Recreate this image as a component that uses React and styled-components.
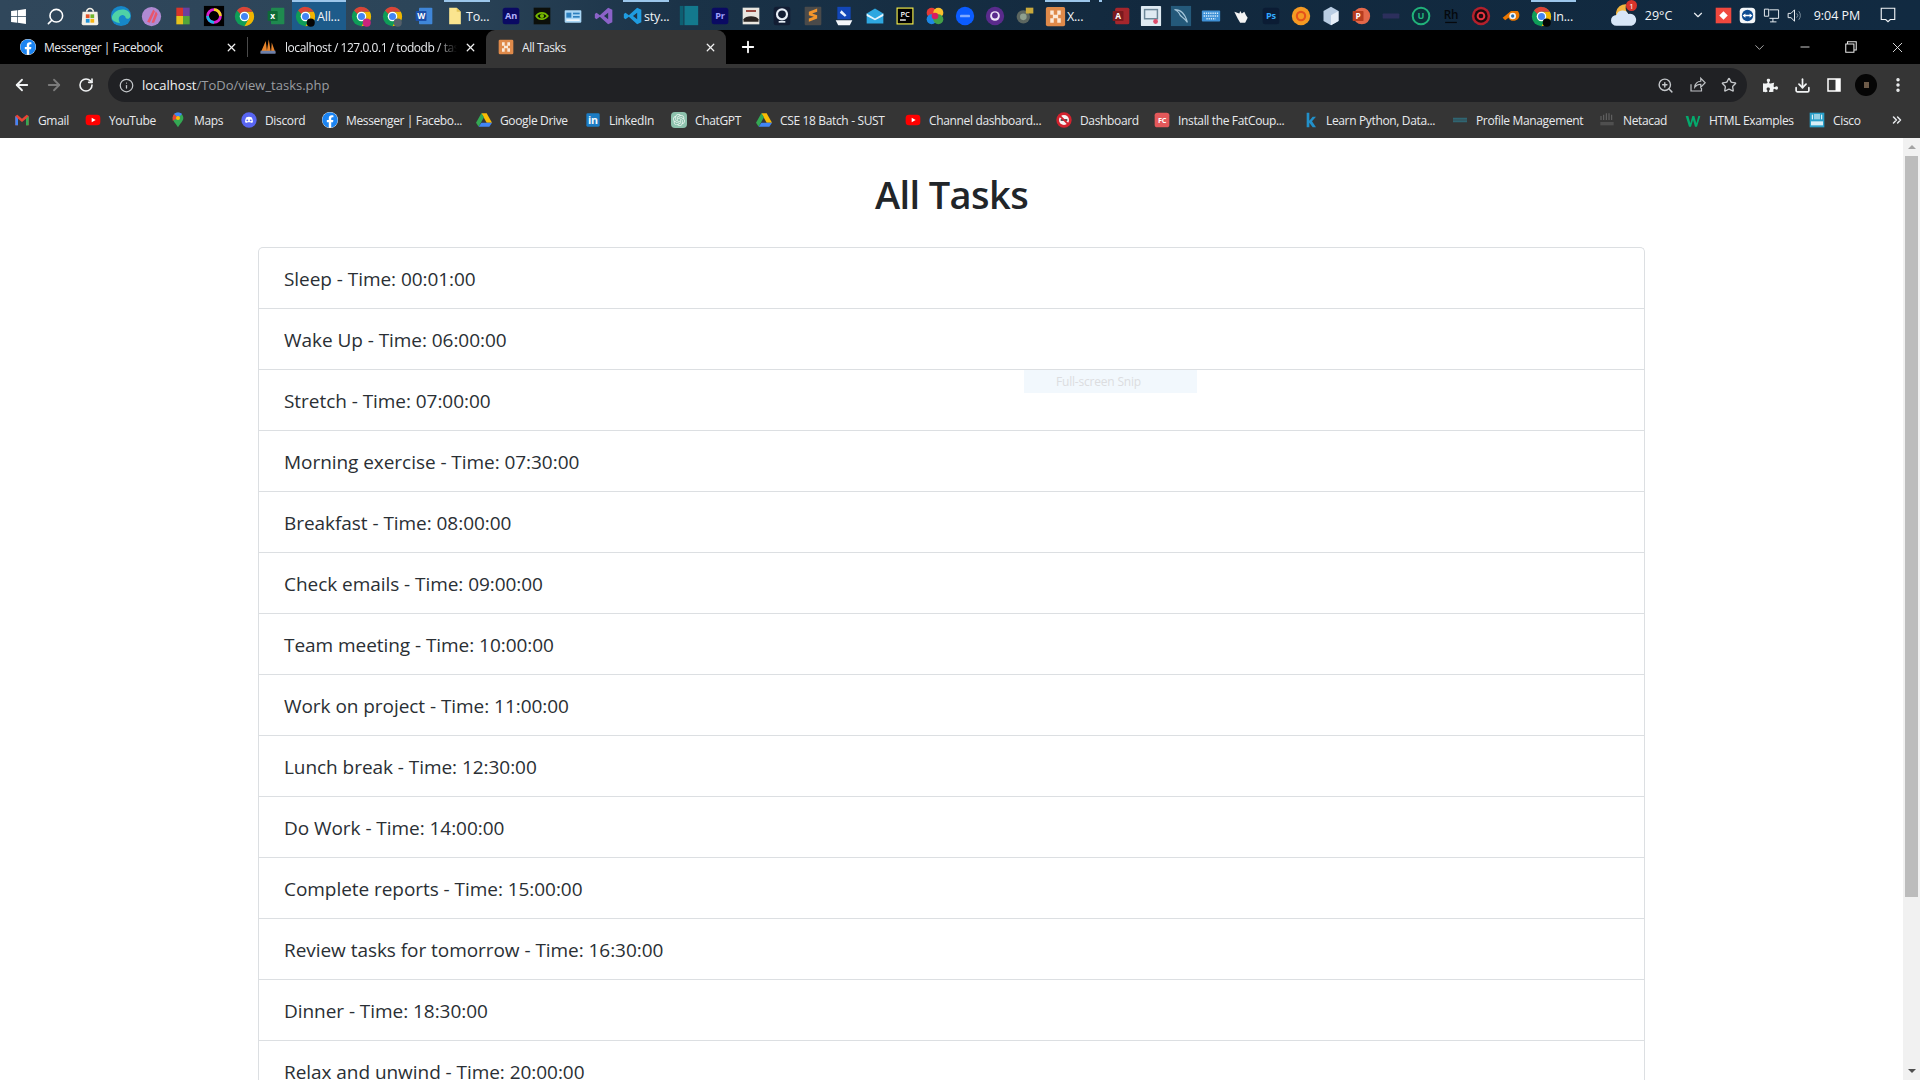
import React from "react";
import styled, { createGlobalStyle } from "styled-components";
import {
  ArrowLeft,
  ArrowRight,
  RotateCw,
  Info,
  ZoomIn,
  Star,
  Download,
  MoreVertical,
  X,
  Plus,
  Minus,
  ChevronDown,
  ChevronsRight,
  Search,
} from "lucide-react";
import { FaWindows, FaPuzzlePiece, FaFacebook } from "react-icons/fa";
import { SiOpenai } from "react-icons/si";

const UI_FONT = `"Open Sans", "Noto Sans", sans-serif`;

const GlobalStyle = createGlobalStyle`
  html, body { margin: 0; padding: 0; height: 100%; overflow: hidden; background: #fff; }
  * { box-sizing: border-box; }
`;

const Screen = styled.div`
  width: 1920px;
  height: 1080px;
  display: flex;
  flex-direction: column;
  overflow: hidden;
  font-family: ${UI_FONT};
  position: relative;
`;

/* windows taskbar */
const Taskbar = styled.div`
  height: 30px;
  flex: none;
  display: flex;
  align-items: stretch;
  background: linear-gradient(90deg, #30475b 0%, #2c4559 22%, #1a3247 36%, #12293e 60%, #112a41 100%);
  color: #f2f5f8;
  font-size: 12.5px;
`;

const TaskItem = styled.div`
  flex: none;
  width: ${({ $w }) => $w || 31}px;
  margin-left: ${({ $ml }) => $ml || 0}px;
  padding-left: ${({ $pad }) => $pad || 0}px;
  display: flex;
  align-items: center;
  justify-content: ${({ $label }) => ($label ? "flex-start" : "center")};
  gap: 1px;
  position: relative;
  background: ${({ $active }) => ($active ? "#1d5b8a" : "transparent")};
  border-top: ${({ $open }) => ($open ? "2px solid #9cc6ea" : "2px solid transparent")};
  white-space: nowrap;
  letter-spacing: -0.2px;
`;

const PinMark = styled.div`
  flex: none;
  width: 16px;
  padding-left: 9px;
`;

const PinStrip = styled.div`
  width: 3px;
  height: 2px;
  background: #9cc6ea;
`;

const Tray = styled.div`
  display: flex;
  align-items: center;
  margin-left: 35px;
  font-size: 12.5px;
`;

const TraySlot = styled.div`
  flex: none;
  display: flex;
  align-items: center;
  justify-content: center;
  width: ${({ $w }) => $w}px;
  margin-left: ${({ $ml }) => $ml || 0}px;
  white-space: nowrap;
  position: relative;
`;

const Badge = styled.span`
  position: absolute;
  top: -2px;
  right: 0;
  width: 11px;
  height: 11px;
  border-radius: 50%;
  background: #d9342b;
  color: #fff;
  font-size: 8px;
  line-height: 11px;
  text-align: center;
`;

/* chrome tabs */
const TabStrip = styled.div`
  height: 34px;
  flex: none;
  display: flex;
  background: #000;
  color: #e8eaed;
  font-size: 12px;
`;

const Tab = styled.div`
  flex: none;
  width: ${({ $w }) => $w}px;
  display: flex;
  align-items: center;
  padding-left: ${({ $pl }) => $pl}px;
  position: relative;
  background: ${({ $active }) => ($active ? "#353535" : "transparent")};
  border-radius: ${({ $active }) => ($active ? "9px 9px 0 0" : "0")};
  letter-spacing: -0.45px;
`;

const TabTitle = styled.span`
  margin-left: 8px;
  width: ${({ $w }) => $w}px;
  overflow: hidden;
  white-space: nowrap;
  mask-image: ${({ $fade }) => ($fade ? "linear-gradient(90deg, #000 88%, transparent)" : "none")};
`;

const TabClose = styled.span`
  position: absolute;
  right: 9px;
  top: 11px;
  display: flex;
  color: #f1f1f1;
`;

const TabDivider = styled.div`
  flex: none;
  width: 1px;
  height: 20px;
  margin-top: 7px;
  background: #4a4a4a;
`;

const NewTab = styled.div`
  flex: none;
  width: 22px;
  margin-left: 11px;
  display: flex;
  align-items: center;
  justify-content: center;
  color: #fff;
`;

const WindowControls = styled.div`
  margin-left: auto;
  display: flex;
  align-items: center;
  color: #e8e8e8;
`;

const WindowButton = styled.div`
  flex: none;
  width: 46px;
  display: flex;
  justify-content: center;
`;

/* chrome toolbar */
const Toolbar = styled.div`
  height: 38px;
  flex: none;
  display: flex;
  align-items: flex-end;
  padding-left: 6px;
  background: #353535;
  color: #f1f3f4;
`;

const NavButton = styled.div`
  flex: none;
  width: 32px;
  height: 34px;
  margin-left: ${({ $ml }) => $ml || 0}px;
  display: flex;
  align-items: center;
  justify-content: center;
  color: ${({ $dim }) => ($dim ? "#7b7b7b" : "#f1f3f4")};
`;

const Omnibox = styled.div`
  flex: none;
  width: 1639px;
  height: 34px;
  margin-left: 6px;
  border-radius: 17px;
  background: #202124;
  display: flex;
  align-items: center;
  padding-left: 11px;
`;

const Url = styled.div`
  margin-left: 8px;
  font-size: 13px;
  letter-spacing: 0;
  color: #f1f3f4;
`;

const UrlPath = styled.span`
  color: #9a9da1;
`;

const OmniActions = styled.div`
  margin-left: auto;
  display: flex;
  align-items: center;
  padding-right: 2px;
  color: #c4c7ca;
`;

const OmniButton = styled.div`
  flex: none;
  width: 32px;
  display: flex;
  justify-content: center;
`;

const Avatar = styled.div`
  width: 22px;
  height: 22px;
  border-radius: 50%;
  background: #050505;
  display: flex;
  align-items: center;
  justify-content: center;
`;

const AvatarDot = styled.div`
  width: 5px;
  height: 6px;
  background: #6c5a48;
`;

/* bookmarks */
const Bookmarks = styled.div`
  height: 36px;
  flex: none;
  display: flex;
  align-items: center;
  padding-left: 14px;
  background: #353535;
  color: #e8eaed;
  font-size: 12px;
  letter-spacing: -0.35px;
`;

const Bookmark = styled.div`
  flex: none;
  width: ${({ $w }) => $w}px;
  display: flex;
  align-items: center;
  gap: 8px;
  white-space: nowrap;
`;

const BookmarkMore = styled.div`
  flex: none;
  display: flex;
  margin-left: 9px;
`;

const ChatGptTile = styled.span`
  flex: none;
  display: flex;
  width: 16px;
  height: 16px;
  border-radius: 4px;
  background: #8dc2ad;
  align-items: center;
  justify-content: center;
`;

const FacebookDisc = styled(FaFacebook)`
  flex: none;
  background: #fff;
  border-radius: 50%;
`;

/* page */
const Viewport = styled.div`
  flex: 1;
  min-height: 0;
  display: flex;
  background: #fff;
`;

const Page = styled.div`
  flex: 1;
  min-width: 0;
  overflow: hidden;
  padding: 32px 258px 0;
  color: #2a2f34;
  font-family: ${UI_FONT};
`;

const Heading = styled.h1`
  margin: 0 0 29px;
  font-size: 38px;
  line-height: 48px;
  font-weight: 600;
  text-align: center;
  letter-spacing: -0.6px;
  color: #212529;
`;

const TaskList = styled.ul`
  list-style: none;
  margin: 0;
  padding: 0;
  border: 1px solid #dcdfe2;
  border-bottom: 0;
  border-radius: 5px 5px 0 0;
`;

const TaskRow = styled.li`
  height: 61px;
  padding: 2px 25px 0;
  display: flex;
  align-items: center;
  font-size: 19px;
  letter-spacing: -0.05px;
  border-bottom: 1px solid #dcdfe2;
`;

const Scrollbar = styled.div`
  flex: none;
  width: 17px;
  display: flex;
  flex-direction: column;
  background: #f1f1f1;
`;

const ScrollArrow = styled.div`
  flex: none;
  height: 18px;
  display: flex;
  align-items: center;
  justify-content: center;
`;

const ScrollTriangle = styled.div`
  width: 0;
  height: 0;
  border-left: 4px solid transparent;
  border-right: 4px solid transparent;
  ${({ $down }) => ($down ? "border-top: 4px solid #505050;" : "border-bottom: 4px solid #a3a3a3;")}
`;

const ScrollTrack = styled.div`
  flex: 1;
  padding: 0 2px;
`;

const ScrollThumb = styled.div`
  height: 741px;
  background: #bcbcbc;
`;

const SnipLabel = styled.div`
  position: absolute;
  left: 1024px;
  top: 370px;
  width: 173px;
  height: 23px;
  padding-left: 32px;
  background: #f2f8fd;
  color: #dcdde0;
  font-size: 12px;
  line-height: 23px;
  letter-spacing: -0.2px;
`;

const Glyph = ({ s = 20, children }) => (
  <svg width={s} height={s} viewBox="0 0 24 24" style={{ flex: "none" }}>
    {children}
  </svg>
);

const Letters = ({ x = 12, y = 16, size = 12, fill = "#fff", weight = 700, children }) => (
  <text x={x} y={y} fontSize={size} fontWeight={weight} fill={fill} textAnchor="middle" fontFamily="Open Sans, sans-serif">
    {children}
  </text>
);

const Chrome = ({ s = 21, dot }) => (
  <Glyph s={s}>
    <circle cx="12" cy="12" r="11" fill="#0f9d58" />
    <path d="M21.5 6.5A11 11 0 0 1 12 23l4.8-8.3A5.5 5.5 0 0 0 12 6.5Z" fill="#f4b400" />
    <path d="M12 1A11 11 0 0 1 21.5 6.5H12A5.5 5.5 0 0 0 7.2 9.2L3.5 5A11 11 0 0 1 12 1Z" fill="#db4437" />
    <circle cx="12" cy="12" r="5.5" fill="#fff" />
    <circle cx="12" cy="12" r="4" fill="#4285f4" />
    {dot && <circle cx="18" cy="19" r="4.6" fill={dot} />}
  </Glyph>
);

const Square = ({ fill, text, color, r = 3 }) => (
  <Glyph>
    <rect x="2" y="2" width="20" height="20" rx={r} fill={fill} />
    <Letters size={11} fill={color || "#fff"}>
      {text}
    </Letters>
  </Glyph>
);

const XamppMark = ({ s }) => (
  <Glyph s={s}>
    <rect x="1" y="1" width="22" height="22" rx="2" fill="#df8a4a" />
    <path d="M6 5h4v5H6Zm8 0h4v5h-4ZM6 14h4v5H6Zm8 0h4v5h-4ZM9 10h6v4H9Z" fill="#fbe9d8" />
  </Glyph>
);

const taskIcons = {
  store: (
    <Glyph>
      <path d="M3 7h18l1 14a2 2 0 0 1-2 2H4a2 2 0 0 1-2-2Z" fill="#f2efe6" />
      <path d="M8 7a4 4 0 0 1 8 0" fill="none" stroke="#f2efe6" strokeWidth="2" />
      <rect x="7" y="10" width="4.5" height="4.5" fill="#e2542b" />
      <rect x="12.5" y="10" width="4.5" height="4.5" fill="#6fb52c" />
      <rect x="7" y="15.5" width="4.5" height="4.5" fill="#1f93d8" />
      <rect x="12.5" y="15.5" width="4.5" height="4.5" fill="#f7b511" />
    </Glyph>
  ),
  edge: (
    <Glyph s={22}>
      <circle cx="12" cy="12" r="11" fill="#1687c9" />
      <path d="M2 14C3 6 14 2 20 7c3 3 3 8-1 8-3 0-1-3-5-4-4 0-6 4-3 9-5-1-9-3-9-6Z" fill="#4fd2a6" />
    </Glyph>
  ),
  orb: (
    <Glyph s={21}>
      <circle cx="12" cy="12" r="11" fill="#b08ad3" />
      <path d="M7 18 14 4l2 2-6 13Zm5 1 5-13 2 3-4 10Z" fill="#e8566d" />
    </Glyph>
  ),
  blocks: (
    <Glyph>
      <rect x="4" y="2" width="8" height="10" fill="#d8352a" />
      <rect x="12" y="2" width="8" height="10" fill="#6a3fa0" />
      <rect x="4" y="12" width="8" height="10" fill="#e7c31c" />
      <rect x="12" y="12" width="8" height="10" fill="#52a43a" />
    </Glyph>
  ),
  ring: (
    <Glyph s={22}>
      <rect x="1" y="1" width="22" height="22" fill="#000" />
      <circle cx="12" cy="12" r="7" fill="none" stroke="#d81fd0" strokeWidth="3" />
      <path d="M12 5a7 7 0 0 1 7 7" fill="none" stroke="#f4d41e" strokeWidth="3" />
      <path d="M12 19a7 7 0 0 1-7-7" fill="none" stroke="#1fb6e8" strokeWidth="3" />
    </Glyph>
  ),
  chrome: <Chrome />,
  chromeDot: <Chrome dot="#050505" />,
  chromePink: <Chrome dot="#c9247d" />,
  chromeGrey: <Chrome dot="#55606a" />,
  excel: (
    <Glyph>
      <rect x="6" y="2" width="16" height="20" rx="1" fill="#1f8a4f" />
      <rect x="2" y="6" width="12" height="12" rx="1" fill="#0e6a37" />
      <Letters x={8} y={16} size={10}>x</Letters>
    </Glyph>
  ),
  word: (
    <Glyph>
      <rect x="6" y="2" width="16" height="20" rx="1" fill="#3f86d8" />
      <rect x="2" y="6" width="13" height="12" rx="1" fill="#1c4fa8" />
      <Letters x={8.5} y={16} size={10}>W</Letters>
    </Glyph>
  ),
  folder: (
    <Glyph>
      <path d="M5 2h9l5 5v15H5Z" fill="#fbe58f" />
      <path d="M14 2l5 5h-5Z" fill="#e5c65a" />
    </Glyph>
  ),
  an: <Square fill="#0a0a63" text="An" color="#b5b5ff" />,
  nvidia: (
    <Glyph>
      <rect x="2" y="2" width="20" height="20" fill="#0c0f0a" />
      <path d="M5 12c3-5 10-5 14 0-4 5-11 5-14 0Z" fill="none" stroke="#76b900" strokeWidth="2" />
      <circle cx="12" cy="12" r="2.5" fill="#76b900" />
    </Glyph>
  ),
  idcard: (
    <Glyph>
      <rect x="2" y="5" width="20" height="15" rx="1" fill="#a9d6f5" />
      <rect x="4" y="8" width="6" height="6" fill="#2c7fbe" />
      <rect x="12" y="8" width="8" height="2" fill="#2c7fbe" />
      <rect x="12" y="12" width="8" height="2" fill="#2c7fbe" />
      <rect x="4" y="16" width="16" height="2" fill="#f0f6fb" />
    </Glyph>
  ),
  vs: (
    <Glyph>
      <path d="M17 2 22 4.5v15L17 22 7 13l-4 3-2-1.5v-5L3 8l4 3Zm0 6-5 4 5 4Z" fill="#8b62c8" />
    </Glyph>
  ),
  vscode: (
    <Glyph>
      <path d="M17 2 22 4.5v15L17 22 7 13l-4 3-2-1.5v-5L3 8l4 3Zm0 6-5 4 5 4Z" fill="#1f9ce0" />
    </Glyph>
  ),
  teal: (
    <Glyph s={22}>
      <rect x="2" y="1" width="4" height="21" fill="#0d5f72" />
      <rect x="7" y="1" width="15" height="21" fill="#13798d" />
    </Glyph>
  ),
  pr: <Square fill="#0a0a63" text="Pr" color="#9f9fff" />,
  car: (
    <Glyph>
      <rect x="2" y="2" width="20" height="20" fill="#e9e6e0" />
      <rect x="6" y="5" width="12" height="2" fill="#8a2b22" />
      <path d="M3 16c2-5 16-5 18 0v3H3Z" fill="#2a2422" />
    </Glyph>
  ),
  webcam: (
    <Glyph>
      <rect x="2" y="1" width="20" height="22" rx="3" fill="#121d33" />
      <circle cx="12" cy="10" r="6" fill="none" stroke="#e6edf5" strokeWidth="2.6" />
      <rect x="8" y="18" width="8" height="2" fill="#e6edf5" />
    </Glyph>
  ),
  sublime: (
    <Glyph>
      <rect x="2" y="1" width="20" height="22" rx="1" fill="#4a4a4a" />
      <path d="M7 10l10-4v4l-6 2 6 2v4L7 22v-4l6-2-6-2Z" fill="#f2952c" transform="translate(0 -3)" />
    </Glyph>
  ),
  blue: (
    <Glyph>
      <rect x="4" y="1" width="16" height="15" fill="#1347b8" />
      <path d="M9 5l6 6-2 2-6-5Z" fill="#e8f2ff" />
      <path d="M2 17h20l-3 6H5Z" fill="#f4f7fb" />
    </Glyph>
  ),
  mail: (
    <Glyph>
      <path d="M2 9 12 3l10 6v12H2Z" fill="#2ea7e0" />
      <path d="M2 9l10 6 10-6v3l-10 5-10-5Z" fill="#e6f5fd" />
    </Glyph>
  ),
  pc: (
    <Glyph>
      <rect x="2.5" y="2.5" width="19" height="19" fill="#000" stroke="#f5ee4a" strokeWidth="1.4" />
      <Letters y={13} size={9} weight={600}>PC</Letters>
      <rect x="6" y="16" width="7" height="1.6" fill="#fff" />
    </Glyph>
  ),
  wheel: (
    <Glyph>
      <circle cx="8" cy="8" r="6" fill="#e53935" />
      <circle cx="16" cy="8" r="6" fill="#fbc02d" />
      <circle cx="8" cy="16" r="6" fill="#1e88e5" />
      <circle cx="16" cy="16" r="6" fill="#43a047" />
      <circle cx="12" cy="12" r="4" fill="#d81b60" />
    </Glyph>
  ),
  zoomApp: (
    <Glyph>
      <circle cx="12" cy="12" r="11" fill="#0b5cff" />
      <rect x="6" y="10.5" width="12" height="3" rx="1" fill="#7fa9ff" />
    </Glyph>
  ),
  github: (
    <Glyph>
      <circle cx="12" cy="12" r="11" fill="#5a2b8c" />
      <g transform="translate(5 5) scale(0.58)">
        <circle cx="12" cy="12" r="10" fill="#efe6f8" />
        <circle cx="12" cy="11" r="6" fill="#5a2b8c" />
      </g>
    </Glyph>
  ),
  dish: (
    <Glyph>
      <circle cx="10" cy="13" r="8" fill="#5c6660" />
      <circle cx="10" cy="13" r="4" fill="#8fa08e" />
      <rect x="13" y="2" width="9" height="7" fill="#c9a93c" />
    </Glyph>
  ),
  xampp: <XamppMark s={21} />,
  access: (
    <Glyph>
      <rect x="5" y="2" width="17" height="20" rx="2" fill="#a4262c" />
      <rect x="2" y="6" width="13" height="12" rx="1" fill="#7b1a1e" />
      <Letters x={8.5} y={16} size={10}>A</Letters>
    </Glyph>
  ),
  monitor: (
    <Glyph s={22}>
      <rect x="1" y="1" width="22" height="22" rx="1" fill="#dfeaf2" />
      <rect x="5" y="5" width="14" height="10" fill="none" stroke="#6d8798" strokeWidth="1.6" />
      <circle cx="17" cy="18" r="2.6" fill="#dd4b6b" />
    </Glyph>
  ),
  mysql: (
    <Glyph s={22}>
      <rect x="1" y="1" width="22" height="22" fill="#24597a" />
      <path d="M5 5c8 0 12 6 14 14-4-6-8-6-9-10-1-2-3-3-5-4Z" fill="none" stroke="#a3c4d8" strokeWidth="1.2" />
    </Glyph>
  ),
  keyboard: (
    <Glyph s={22}>
      <rect x="2" y="6" width="20" height="12" rx="1" fill="#3f91d6" />
      <path d="M4 9h16M4 12h16M7 15h10" stroke="#d6ecfb" strokeWidth="1.4" strokeDasharray="1.4 1" />
    </Glyph>
  ),
  hand: (
    <Glyph>
      <path d="M4 7l6 2 1-3 2 3 3-2 2 4 2 3-3 6h-6l-3-5Z" fill="#f4f4f4" />
    </Glyph>
  ),
  ps: <Square fill="#0b1c34" text="Ps" color="#31a8ff" />,
  ubuntu: (
    <Glyph>
      <circle cx="12" cy="12" r="11" fill="#f59a23" />
      <circle cx="12" cy="12" r="5" fill="none" stroke="#e4521b" strokeWidth="2.5" />
    </Glyph>
  ),
  cube: (
    <Glyph>
      <path d="M12 1l9 5v12l-9 5-9-5V6Z" fill="#b9cde3" />
      <path d="M12 11l9-5v12l-9 5Z" fill="#e6eef7" />
    </Glyph>
  ),
  ppt: (
    <Glyph>
      <circle cx="13" cy="12" r="10" fill="#e4684a" />
      <rect x="2" y="6" width="13" height="12" rx="1" fill="#b83d1f" />
      <Letters x={8.5} y={16} size={10}>P</Letters>
    </Glyph>
  ),
  dim: (
    <Glyph>
      <rect x="2" y="9" width="20" height="6" rx="1" fill="#2c2f5c" />
    </Glyph>
  ),
  upwork: (
    <Glyph>
      <circle cx="12" cy="12" r="10" fill="#0c2d3a" stroke="#21b27a" strokeWidth="2.4" />
      <Letters y={16} size={11} fill="#21b27a">U</Letters>
    </Glyph>
  ),
  rh: (
    <Glyph>
      <Letters y={15} size={14} fill="#05080c" weight={600}>Rh</Letters>
      <rect x="5" y="19" width="14" height="1.5" fill="#05080c" />
    </Glyph>
  ),
  redRing: (
    <Glyph>
      <circle cx="12" cy="12" r="11" fill="#b3202c" />
      <circle cx="12" cy="12" r="8" fill="#1a0a0e" />
      <circle cx="12" cy="12" r="4" fill="none" stroke="#e5343f" strokeWidth="2.4" />
    </Glyph>
  ),
  blender: (
    <Glyph>
      <path d="M2 14 12 6l8 0c3 3 3 9-2 11-4 2-8 0-9-3l-4 3Z" fill="#ea7600" />
      <circle cx="14" cy="12" r="4" fill="#f4f6f8" />
      <circle cx="14" cy="12" r="2" fill="#2a6fb0" />
    </Glyph>
  ),
};

const TASKS = [
  { icon: "store" },
  { icon: "edge" },
  { icon: "orb" },
  { icon: "blocks" },
  { icon: "ring" },
  { icon: "chrome" },
  { icon: "excel" },
  { icon: "chromeDot", label: "All...", w: 54, ml: 1, active: true, pad: 3 },
  { icon: "chromePink" },
  { icon: "chromeGrey" },
  { icon: "word" },
  { icon: "folder", label: "To...", w: 46, ml: 5, pad: 1 },
  { icon: "an", ml: 5 },
  { icon: "nvidia" },
  { icon: "idcard" },
  { icon: "vs" },
  { icon: "vscode", label: "sty...", w: 46, ml: 4 },
  { icon: "teal", ml: 4 },
  { icon: "pr" },
  { icon: "car" },
  { icon: "webcam" },
  { icon: "sublime" },
  { icon: "blue" },
  { icon: "mail" },
  { icon: "pc", w: 30 },
  { icon: "wheel", w: 30 },
  { icon: "zoomApp", w: 30 },
  { icon: "github", w: 30 },
  { icon: "dish", w: 30 },
  { icon: "xampp", label: "X...", w: 45, ml: 5 },
  { pin: true },
  { icon: "access", w: 30 },
  { icon: "monitor", w: 30 },
  { icon: "mysql", w: 30 },
  { icon: "keyboard", w: 30 },
  { icon: "hand", w: 30 },
  { icon: "ps", w: 30 },
  { icon: "ubuntu", w: 30 },
  { icon: "cube", w: 30 },
  { icon: "ppt", w: 30 },
  { icon: "dim", w: 30 },
  { icon: "upwork", w: 30 },
  { icon: "rh", w: 30 },
  { icon: "redRing", w: 30 },
  { icon: "blender", w: 30 },
  { icon: "chromeDot", label: "In...", w: 45, ml: 5 },
];

const Small = ({ children }) => <Glyph s={16}>{children}</Glyph>;

const bookmarkIcons = {
  gmail: (
    <Small>
      <path d="M2 6v14h4V10l6 5 6-5v10h4V6l-3-2-7 6-7-6Z" fill="#ea4335" />
      <path d="M2 6v14h4V10Z" fill="#4285f4" />
      <path d="M22 6v14h-4V10Z" fill="#34a853" />
    </Small>
  ),
  youtube: (
    <Small>
      <rect x="1" y="4" width="22" height="16" rx="5" fill="#f00" />
      <path d="M10 8.5v7l6-3.5Z" fill="#fff" />
    </Small>
  ),
  maps: (
    <Small>
      <path d="M12 1c5 0 8 4 8 8 0 5-5 8-8 14-3-6-8-9-8-14 0-4 3-8 8-8Z" fill="#34a853" />
      <path d="M6 3c3-3 9-3 12 0l-6 6Z" fill="#4285f4" />
      <path d="M4 9c0-2 1-4 2-6l6 6-8 4Z" fill="#ea4335" />
      <circle cx="12" cy="9" r="3" fill="#fbbc04" />
    </Small>
  ),
  discord: (
    <Small>
      <circle cx="12" cy="12" r="11.5" fill="#5865f2" />
      <g transform="translate(5.5 5.5) scale(0.54)" fill="#fff">
        <path d="M4 5c5-3 11-3 16 0 2 4 3 8 3 13-2 1-4 2-6 2l-1-2h-8l-1 2c-2 0-4-1-6-2 0-5 1-9 3-13Z" />
      </g>
      <circle cx="9.5" cy="12.5" r="1.4" fill="#5865f2" />
      <circle cx="14.5" cy="12.5" r="1.4" fill="#5865f2" />
    </Small>
  ),
  facebook: <FacebookDisc size={16} color="#1b84f2" />,
  drive: (
    <Small>
      <path d="M8 2h8l8 14h-8Z" fill="#fbbc04" />
      <path d="M8 2 0 16l4 6 8-14Z" fill="#34a853" />
      <path d="M4 22h16l4-6H8Z" fill="#4285f4" />
    </Small>
  ),
  linkedin: (
    <Small>
      <rect x="2" y="2" width="20" height="20" rx="2" fill="#1c7cc4" />
      <Letters y={18} size={16} fill="#f2f7fb">in</Letters>
    </Small>
  ),
  chatgpt: (
    <ChatGptTile>
      <SiOpenai size={12} color="#e8f4ee" />
    </ChatGptTile>
  ),
  studio: (
    <Small>
      <circle cx="12" cy="12" r="11.5" fill="#d3222e" />
      <circle cx="12" cy="12" r="7.5" fill="#f7f3f3" />
      <rect x="7" y="10.5" width="10" height="3" fill="#5a5254" />
      <path d="M5 5l14 14" stroke="#d3222e" strokeWidth="3" />
    </Small>
  ),
  fc: (
    <Small>
      <rect x="1" y="1" width="22" height="22" rx="4" fill="#e4585a" />
      <Letters y={16} size={11}>FC</Letters>
    </Small>
  ),
  k: (
    <Small>
      <path d="M7 1h4v12l5-6h5l-6 7 6 9h-5l-5-7v7H7Z" fill="#2290c9" />
    </Small>
  ),
  profile: (
    <Small>
      <path d="M2 10h20M2 14h20" stroke="#2e7f92" strokeWidth="3" strokeDasharray="2 1" />
    </Small>
  ),
  netacad: (
    <Small>
      <path d="M3 6v6M7 4v8M11 2v10M15 2v10M19 4v8" stroke="#666" strokeWidth="1.6" />
      <rect x="2" y="15" width="20" height="5" fill="#4f4f4f" />
    </Small>
  ),
  w3: (
    <Small>
      <path d="M1 6h4l3 11 3-11h3l3 11 3-11h3l-5 16h-3l-3-10-3 10H6Z" fill="#04aa6d" />
    </Small>
  ),
  cisco: (
    <Small>
      <rect x="1" y="1" width="22" height="22" fill="#2a9fc9" />
      <path d="M5 4v7M9 3v8M12 3v8M15 3v8M19 4v7" stroke="#fff" strokeWidth="1.5" />
      <rect x="3" y="14" width="18" height="6" fill="#d7eef7" />
    </Small>
  ),
};

const BOOKMARKS = [
  ["gmail", "Gmail", 71],
  ["youtube", "YouTube", 85],
  ["maps", "Maps", 71],
  ["discord", "Discord", 81],
  ["facebook", "Messenger | Facebo...", 154],
  ["drive", "Google Drive", 109],
  ["linkedin", "LinkedIn", 86],
  ["chatgpt", "ChatGPT", 85],
  ["drive", "CSE 18 Batch - SUST", 149],
  ["youtube", "Channel dashboard...", 151],
  ["studio", "Dashboard", 98],
  ["fc", "Install the FatCoup...", 148],
  ["k", "Learn Python, Data...", 150],
  ["profile", "Profile Management", 147],
  ["netacad", "Netacad", 86],
  ["w3", "HTML Examples", 124],
  ["cisco", "Cisco", 72],
];

const ROWS = [
  "Sleep - Time: 00:01:00",
  "Wake Up - Time: 06:00:00",
  "Stretch - Time: 07:00:00",
  "Morning exercise - Time: 07:30:00",
  "Breakfast - Time: 08:00:00",
  "Check emails - Time: 09:00:00",
  "Team meeting - Time: 10:00:00",
  "Work on project - Time: 11:00:00",
  "Lunch break - Time: 12:30:00",
  "Do Work - Time: 14:00:00",
  "Complete reports - Time: 15:00:00",
  "Review tasks for tomorrow - Time: 16:30:00",
  "Dinner - Time: 18:30:00",
  "Relax and unwind - Time: 20:00:00",
];

const PmaIcon = () => (
  <Glyph s={18}>
    <path d="M2 20 9 4l2 16Zm8 0 3-18 3 18Zm6 0 1-14 5 14Z" fill="#e8842a" />
    <rect x="2" y="17" width="20" height="4" fill="#6d7fa8" />
  </Glyph>
);

const SharePage = () => (
  <Glyph s={18}>
    <path d="M4 11v9h14v-4M9 15c0-5 4-8 8-8V3l6 6-6 6v-4c-3 0-6 1-8 4Z" fill="none" stroke="#bfc2c5" strokeWidth="1.6" />
  </Glyph>
);

const SidePanel = () => (
  <Glyph s={18}>
    <rect x="3" y="3" width="18" height="18" fill="#fff" />
    <rect x="5" y="5" width="9" height="14" fill="#353535" />
  </Glyph>
);

const RestoreIcon = () => (
  <Glyph s={14}>
    <path d="M6 7V3h15v14h-4M3 7h14v14H3Z" fill="none" stroke="#e8e8e8" strokeWidth="1.8" />
  </Glyph>
);

const Weather = () => (
  <Glyph s={26}>
    <path d="M14 2a9 9 0 1 0 8 12A9 9 0 0 1 14 2Z" fill="#f3b53f" />
    <path d="M5 22a5 5 0 0 1 0-10 6 6 0 0 1 11-1 5.5 5.5 0 0 1 3 11Z" fill="#d7e6f7" />
  </Glyph>
);

const TrayRed = () => (
  <Glyph s={17}>
    <rect x="1" y="1" width="22" height="22" fill="#f0483e" />
    <path d="M6 12l6-6 6 6-6 6Z" fill="#fff" />
  </Glyph>
);

const TeamViewer = () => (
  <Glyph s={17}>
    <rect x="1" y="1" width="22" height="22" rx="5" fill="#f4f6f8" />
    <circle cx="12" cy="12" r="8" fill="#0e4c92" />
    <path d="M5 12l4-3v2h6V9l4 3-4 3v-2H9v2Z" fill="#fff" />
  </Glyph>
);

const NetworkIcon = () => (
  <Glyph s={17}>
    <path d="M9 4h13v12H9M14 16v5M10 21h9M2 3h6v10H2Z" fill="none" stroke="#e8edf1" strokeWidth="1.4" />
  </Glyph>
);

const VolumeIcon = () => (
  <Glyph s={17}>
    <path d="M3 9h4l5-5v16l-5-5H3Z" fill="none" stroke="#e8edf1" strokeWidth="1.4" />
    <path d="M15 9a4 4 0 0 1 0 6M18 6a9 9 0 0 1 0 12" fill="none" stroke="#8496a6" strokeWidth="1.3" />
  </Glyph>
);

const Notification = () => (
  <Glyph s={18}>
    <path d="M3 3h18v15h-6l-3 3-3-3H3Z" fill="none" stroke="#f2f5f8" strokeWidth="1.5" />
  </Glyph>
);

const MirroredSearch = styled(Search)`
  transform: scaleX(-1);
`;

export default function App() {
  return (
    <>
      <GlobalStyle />
      <Screen>
        <Taskbar>
          <TaskItem $w={36}>
            <FaWindows size={17} color="#fff" />
          </TaskItem>
          <TaskItem $w={38}>
            <MirroredSearch size={19} color="#fff" />
          </TaskItem>
          {TASKS.map((t, i) =>
            t.pin ? (
              <PinMark key={i}>
                <PinStrip />
              </PinMark>
            ) : (
              <TaskItem
                key={i}
                $w={t.w}
                $ml={t.ml}
                $pad={t.pad}
                $label={!!t.label}
                $active={t.active}
                $open={!!t.label}
              >
                {taskIcons[t.icon]}
                {t.label}
              </TaskItem>
            )
          )}
          <Tray>
            <TraySlot $w={26}>
              <Weather />
              <Badge>1</Badge>
            </TraySlot>
            <TraySlot $w={29} $ml={7}>29°C</TraySlot>
            <TraySlot $w={14} $ml={18}>
              <ChevronDown size={16} color="#e8edf1" />
            </TraySlot>
            <TraySlot $w={16} $ml={10}><TrayRed /></TraySlot>
            <TraySlot $w={16} $ml={8}><TeamViewer /></TraySlot>
            <TraySlot $w={16} $ml={8}><NetworkIcon /></TraySlot>
            <TraySlot $w={16} $ml={7}><VolumeIcon /></TraySlot>
            <TraySlot $w={42} $ml={14}>9:04 PM</TraySlot>
            <TraySlot $w={18} $ml={21}><Notification /></TraySlot>
          </Tray>
        </Taskbar>

        <TabStrip>
          <Tab $w={247} $pl={20}>
            <FacebookDisc size={16} color="#1b84f2" />
            <TabTitle $w={150}>Messenger | Facebook</TabTitle>
            <TabClose><X size={13} strokeWidth={2.4} /></TabClose>
          </Tab>
          <TabDivider />
          <Tab $w={238} $pl={11}>
            <PmaIcon />
            <TabTitle $w={172} $fade>localhost / 127.0.0.1 / tododb / tasks</TabTitle>
            <TabClose><X size={13} strokeWidth={2.4} /></TabClose>
          </Tab>
          <Tab $w={240} $active $pl={12}>
            <XamppMark s={16} />
            <TabTitle $w={120}>All Tasks</TabTitle>
            <TabClose><X size={13} strokeWidth={2.4} /></TabClose>
          </Tab>
          <NewTab><Plus size={18} strokeWidth={2.4} /></NewTab>
          <WindowControls>
            <WindowButton><ChevronDown size={15} strokeWidth={1.3} color="#cfcfcf" /></WindowButton>
            <WindowButton><Minus size={14} strokeWidth={1.5} /></WindowButton>
            <WindowButton><RestoreIcon /></WindowButton>
            <WindowButton><X size={17} strokeWidth={1.3} /></WindowButton>
          </WindowControls>
        </TabStrip>

        <Toolbar>
          <NavButton><ArrowLeft size={18} strokeWidth={2.4} /></NavButton>
          <NavButton $dim><ArrowRight size={18} strokeWidth={2.4} /></NavButton>
          <NavButton><RotateCw size={16} strokeWidth={2.4} /></NavButton>
          <Omnibox>
            <Info size={15} color="#c4c7ca" />
            <Url>
              localhost<UrlPath>/ToDo/view_tasks.php</UrlPath>
            </Url>
            <OmniActions>
              <OmniButton><ZoomIn size={17} /></OmniButton>
              <OmniButton><SharePage /></OmniButton>
              <OmniButton><Star size={16} /></OmniButton>
            </OmniActions>
          </Omnibox>
          <NavButton $ml={7}><FaPuzzlePiece size={15} /></NavButton>
          <NavButton><Download size={17} strokeWidth={2.4} /></NavButton>
          <NavButton><SidePanel /></NavButton>
          <NavButton><Avatar><AvatarDot /></Avatar></NavButton>
          <NavButton><MoreVertical size={18} strokeWidth={2.6} /></NavButton>
        </Toolbar>

        <Bookmarks>
          {BOOKMARKS.map(([icon, text, w], i) => (
            <Bookmark key={i} $w={w}>
              {bookmarkIcons[icon]}
              {text}
            </Bookmark>
          ))}
          <BookmarkMore><ChevronsRight size={14} strokeWidth={2.6} /></BookmarkMore>
        </Bookmarks>

        <Viewport>
          <Page>
            <Heading>All Tasks</Heading>
            <TaskList>
              {ROWS.map((r) => (
                <TaskRow key={r}>{r}</TaskRow>
              ))}
            </TaskList>
          </Page>
          <Scrollbar>
            <ScrollArrow><ScrollTriangle /></ScrollArrow>
            <ScrollTrack><ScrollThumb /></ScrollTrack>
            <ScrollArrow><ScrollTriangle $down /></ScrollArrow>
          </Scrollbar>
        </Viewport>

        <SnipLabel>Full-screen Snip</SnipLabel>
      </Screen>
    </>
  );
}
